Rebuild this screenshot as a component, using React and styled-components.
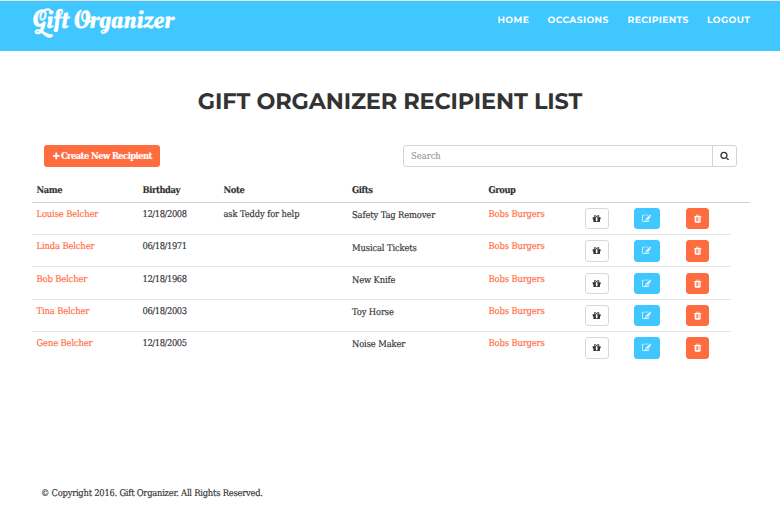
import React from "react";
import styled, { createGlobalStyle } from "styled-components";

const GlobalStyle = createGlobalStyle`
  *, *::before, *::after { box-sizing: border-box; }
  body {
    margin: 0;
    background: #fff;
    color: #333;
    font-family: "Roboto Slab", "DejaVu Serif Condensed", "DejaVu Serif", serif;
    font-stretch: condensed;
    font-size: 9.3px;
    line-height: 13px;
    -webkit-text-stroke: 0.15px currentColor;
    text-rendering: geometricPrecision;
    overflow: hidden;
  }
`;

const Page = styled.div`
  display: flex;
  flex-direction: column;
  height: 508px;
`;

const Navbar = styled.header`
  display: flex;
  justify-content: space-between;
  height: 51px;
  padding: 0 31px 0 32px;
  background: #40c7ff;
  border-top: 1px solid #e4e4e4;
  -webkit-text-stroke: 0;
`;

const Brand = styled.a`
  margin-top: 2.5px;
  color: #fff;
  font: 400 26px/32px "Oleo Script Swash Caps", Lobster, "Liberation Serif", serif;
  -webkit-text-stroke: 0.2px #fff;
  letter-spacing: ${(p) => p.$spacing}px;
  white-space: nowrap;
`;

const Nav = styled.nav`
  display: flex;
  gap: 19px;
  padding-top: 12.5px;
`;

const NavLink = styled.a`
  width: ${(p) => p.$width}px;
  color: #fff;
  font: 700 9.2px/14px Montserrat, Inter, sans-serif;
  letter-spacing: 0.4px;
  white-space: nowrap;
`;

const Title = styled.h1`
  margin: 35px 0 0;
  text-align: center;
  font: 700 22.4px/30px Montserrat, Inter, sans-serif;
  letter-spacing: -0.12px;
  white-space: nowrap;
  -webkit-text-stroke: 0;
`;

const Toolbar = styled.div`
  display: flex;
  justify-content: space-between;
  margin: 29px 43px 0 44px;
  height: 21.5px;
`;

const CreateButton = styled.button`
  display: flex;
  align-items: center;
  gap: 1px;
  width: 116px;
  height: 21.5px;
  padding: 0 0 0 7.5px;
  border: 0;
  border-radius: 3px;
  background: #ff6c40;
  color: #fff;
  font: inherit;
  font-weight: 700;
  letter-spacing: -0.55px;
  white-space: nowrap;
`;

const SearchGroup = styled.div`
  display: flex;
  width: 334px;
  height: 21.5px;
  border: 1px solid #d4d4d4;
  border-radius: 3px;
`;

const SearchInput = styled.input`
  flex: 1;
  min-width: 0;
  padding: 0 7px;
  border: 0;
  background: none;
  font: inherit;
  &::placeholder { color: #999; opacity: 1; }
`;

const SearchButton = styled.button`
  display: grid;
  place-items: center;
  width: 24px;
  padding: 0;
  border: 0;
  border-left: 1px solid #d4d4d4;
  background: none;
  color: #333;
`;

const Table = styled.div`
  margin: 10.5px 30px 0 32px;
`;

const Row = styled.div`
  display: grid;
  grid-template-columns: 106px 81px 128.5px 136.5px 96px 49.5px 51.5px 49.5px;
  width: 698.5px;
  height: 32.25px;
  border-top: ${(p) => (p.$first ? "0" : "1px solid #e6e6e6")};
  &:nth-child(2) { height: 31.7px; }
`;

const HeadRow = styled(Row)`
  width: 718px;
  height: 25.5px;
  padding-top: 2px;
  border-top: 0;
  border-bottom: 1px solid #d0d0d0;
  font-weight: 700;
`;

const Cell = styled.div`
  padding: ${(p) => p.$top ?? 5.2}px 0 0 4.5px;
  color: ${(p) => (p.$link ? "#ff6c40" : "inherit")};
  letter-spacing: ${(p) => p.$spacing ?? -0.12}px;
  white-space: nowrap;
`;

const IconButton = styled.button`
  display: grid;
  place-items: center;
  width: ${(p) => p.$width}px;
  height: 21.5px;
  padding: 0;
  border: 1px solid ${(p) => p.$border};
  border-radius: 3px;
  background: ${(p) => p.$bg};
  color: ${(p) => p.$fg};
`;

const Glyph = styled.svg`
  display: block;
  flex: none;
  width: ${(p) => p.$size}px;
  height: ${(p) => p.$size}px;
  fill: currentColor;
`;

const Footer = styled.footer`
  margin: auto 0 8.5px 41px;
  letter-spacing: -0.23px;
`;

const paths = {
  plus: "M1600 736v192q0 40-28 68t-68 28h-416v416q0 40-28 68t-68 28h-192q-40 0-68-28t-28-68v-416h-416q-40 0-68-28t-28-68v-192q0-40 28-68t68-28h416v-416q0-40 28-68t68-28h192q40 0 68 28t28 68v416h416q40 0 68 28t28 68z",
  search: "M1216 832q0-185-131.5-316.5t-316.5-131.5-316.5 131.5-131.5 316.5 131.5 316.5 316.5 131.5 316.5-131.5 131.5-316.5zm512 832q0 52-38 90t-90 38q-54 0-90-38l-343-342q-179 124-399 124-143 0-273.5-55.5t-225-150-150-225-55.5-273.5 55.5-273.5 150-225 225-150 273.5-55.5 273.5 55.5 225 150 150 225 55.5 273.5q0 220-124 399l343 343q37 37 37 90z",
  gift: "M1056 1356v-716h-320v716q0 25 18 38.5t46 13.5h192q28 0 46-13.5t18-38.5zm-456-844h195l-126-161q-26-31-69-31-40 0-68 28t-28 68 28 68 68 28zm688-96q0-40-28-68t-68-28q-43 0-69 31l-125 161h194q40 0 68-28t28-68zm376 256v320q0 14-9 23t-23 9h-96v416q0 40-28 68t-68 28h-1088q-40 0-68-28t-28-68v-416h-96q-14 0-23-9t-9-23v-320q0-14 9-23t23-9h440q-93 0-158.5-65.5t-65.5-158.5 65.5-158.5 158.5-65.5q107 0 168 77l128 165 128-165q61-77 168-77 93 0 158.5 65.5t65.5 158.5-65.5 158.5-158.5 65.5h440q14 0 23 9t9 23z",
  edit: "M888 1184l116-116-152-152-116 116v56h96v96h56zm440-720q-16-16-33 1l-350 350q-17 17-1 33t33-1l350-350q17-17 1-33zm80 594v190q0 119-84.5 203.5t-203.5 84.5h-832q-119 0-203.5-84.5t-84.5-203.5v-832q0-119 84.5-203.5t203.5-84.5h832q63 0 117 25 15 7 18 23 3 17-9 29l-49 49q-14 14-32 8-23-6-45-6h-832q-66 0-113 47t-47 113v832q0 66 47 113t113 47h832q66 0 113-47t47-113v-126q0-13 9-22l64-64q15-15 35-7t20 29zm-96-738l288 288-672 672h-288v-288zm444 132l-92 92-288-288 92-92q28-28 68-28t68 28l152 152q28 28 28 68t-28 68z",
  trash: "M704 1376v-704q0-14-9-23t-23-9h-64q-14 0-23 9t-9 23v704q0 14 9 23t23 9h64q14 0 23-9t9-23zm256 0v-704q0-14-9-23t-23-9h-64q-14 0-23 9t-9 23v704q0 14 9 23t23 9h64q14 0 23-9t9-23zm256 0v-704q0-14-9-23t-23-9h-64q-14 0-23 9t-9 23v704q0 14 9 23t23 9h64q14 0 23-9t9-23zm-544-992h448l-48-117q-7-9-17-11h-317q-10 2-17 11zm928 32v64q0 14-9 23t-23 9h-96v948q0 83-47 143.5t-113 60.5h-832q-66 0-113-58.5t-47-141.5v-952h-96q-14 0-23-9t-9-23v-64q0-14 9-23t23-9h309l70-167q15-37 54-63t79-26h320q40 0 79 26t54 63l70 167h309q14 0 23 9t9 23z",
};

const Icon = ({ name, size = 9.3 }) => (
  <Glyph $size={size} viewBox="0 0 1792 1792" aria-hidden="true">
    <path d={paths[name]} />
  </Glyph>
);

const links = [["HOME", 31], ["OCCASIONS", 61], ["RECIPIENTS", 60.5], ["LOGOUT", 42]];

const recipients = [
  ["Louise Belcher", "12/18/2008", "ask Teddy for help", "Safety Tag Remover"],
  ["Linda Belcher", "06/18/1971", "", "Musical Tickets"],
  ["Bob Belcher", "12/18/1968", "", "New Knife"],
  ["Tina Belcher", "06/18/2003", "", "Toy Horse"],
  ["Gene Belcher", "12/18/2005", "", "Noise Maker"],
];

export default function App() {
  return (
    <Page>
      <GlobalStyle />
      <Navbar>
        <Brand $spacing={0}>Gift Organizer</Brand>
        <Nav>
          {links.map(([label, width]) => (
            <NavLink key={label} $width={width}>{label}</NavLink>
          ))}
        </Nav>
      </Navbar>
      <Title>GIFT ORGANIZER RECIPIENT LIST</Title>
      <Toolbar>
        <CreateButton><Icon name="plus" size={8.5} />Create New Recipient</CreateButton>
        <SearchGroup>
          <SearchInput placeholder="Search" />
          <SearchButton aria-label="Search"><Icon name="search" /></SearchButton>
        </SearchGroup>
      </Toolbar>
      <Table>
        <HeadRow>
          {["Name", "Birthday", "Note", "Gifts", "Group"].map((h) => (
            <Cell key={h} $spacing={-0.4}>{h}</Cell>
          ))}
        </HeadRow>
        {recipients.map(([name, birthday, note, gift], i) => (
          <Row key={name} $first={i === 0}>
            <Cell $link>{name}</Cell>
            <Cell $spacing={-0.4}>{birthday}</Cell>
            <Cell>{note}</Cell>
            <Cell $top={6.5}>{gift}</Cell>
            <Cell $link>Bobs Burgers</Cell>
            <Cell><IconButton $width={24.5} $bg="#fff" $border="#d8d8d8" $fg="#333"><Icon name="gift" /></IconButton></Cell>
            <Cell><IconButton $width={25.5} $bg="#40c7ff" $border="#40c7ff" $fg="#fff"><Icon name="edit" /></IconButton></Cell>
            <Cell><IconButton $width={23.5} $bg="#ff6c40" $border="#ff6c40" $fg="#fff"><Icon name="trash" /></IconButton></Cell>
          </Row>
        ))}
      </Table>
      <Footer>© Copyright 2016. Gift Organizer. All Rights Reserved.</Footer>
    </Page>
  );
}
